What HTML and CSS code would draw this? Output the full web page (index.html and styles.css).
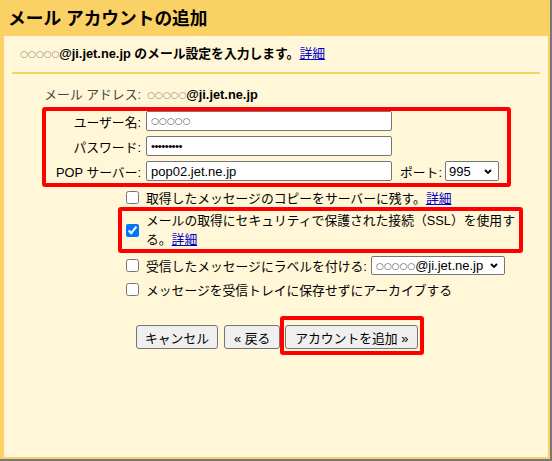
FILE: index.html
```html
<!DOCTYPE html>
<html lang="ja">
<head>
<meta charset="utf-8">
<title>メール アカウントの追加</title>
<link rel="stylesheet" href="styles.css">
</head>
<body>
<div class="win">
  <div class="head">メール アカウントの追加</div>
  <div class="content">
    <p class="intro"><span class="mask">○○○○○</span>@ji.jet.ne.jp のメール設定を入力します。<a class="link" href="#">詳細</a></p>
    <div class="rule"></div>
    <div class="addr"><span class="addr-lbl">メール アドレス:</span><b class="addr-val"><span class="mask">○○○○○</span>@ji.jet.ne.jp</b></div>

    <div class="hl fields">
      <div class="frow"><label class="flbl">ユーザー名:</label><input class="field field-mask" type="text" value="○○○○○"></div>
      <div class="frow"><label class="flbl">パスワード:</label><input class="field field-pw" type="password" value="123456789"></div>
      <div class="frow"><label class="flbl">POP サーバー:</label><input class="field" type="text" value="pop02.jet.ne.jp"><span class="port-lbl">ポート:</span><span class="sel sel-port"><span>995</span><svg class="chev" width="8" height="5" viewBox="0 0 8 5"><path d="M1 1 L4 4 L7 1" fill="none" stroke="#000" stroke-width="1.8"/></svg></span></div>
    </div>

    <div class="crow"><input class="cb" type="checkbox"><span>取得したメッセージのコピーをサーバーに残す。<a class="link" href="#">詳細</a></span></div>

    <div class="hl ssl">
      <input class="cb" type="checkbox" checked>
      <span class="ssl-text">メールの取得にセキュリティで保護された接続（SSL）を使用す<br>る。<a class="link" href="#">詳細</a></span>
    </div>

    <div class="crow crow-tall"><input class="cb" type="checkbox"><span>受信したメッセージにラベルを付ける:</span><span class="sel sel-label"><span><span class="mask mask-sel">○○○○○</span>@ji.jet.ne.jp</span><svg class="chev" width="8" height="5" viewBox="0 0 8 5"><path d="M1 1 L4 4 L7 1" fill="none" stroke="#000" stroke-width="1.8"/></svg></span></div>

    <div class="crow crow-tall"><input class="cb" type="checkbox"><span>メッセージを受信トレイに保存せずにアーカイブする</span></div>

    <div class="buttons">
      <button class="btn btn-cancel" type="button">キャンセル</button>
      <button class="btn btn-back" type="button">« 戻る</button>
      <div class="hl add-box"><button class="btn btn-add" type="button">アカウントを追加 »</button></div>
    </div>
  </div>
</div>
</body>
</html>
```
FILE: styles.css
```css
html, body {
  margin: 0;
  padding: 0;
}
body {
  width: 552px;
  height: 461px;
  font-family: "Liberation Sans", "Noto Sans CJK JP", sans-serif;
  font-size: 12.8px;
  color: #000;
}
.win {
  box-sizing: border-box;
  width: 552px;
  height: 461px;
  background: #fad165;
  border-right: 2px solid #777;
  border-bottom: 2px solid #777;
  padding: 0 2px 2px 4px;
  display: flex;
  flex-direction: column;
}
.head {
  height: 36px;
  box-sizing: border-box;
  padding: 1px 0 0 4px;
  line-height: 36px;
  font-size: 17.7px;
  font-weight: bold;
  white-space: nowrap;
}
.content {
  flex: 1;
  background: #fff7d7;
}
.link {
  color: #0000cc;
  text-decoration: underline;
  font-weight: normal;
}
.mask {
  font-family: "DejaVu Sans", sans-serif;
  font-size: 9px;
  font-weight: normal;
  color: #8c8c8c;
  vertical-align: 1px;
}
.mask-sel {
  color: #555;
}
.intro {
  margin: 0;
  padding: 8px 0 0 16px;
  line-height: 19px;
  font-weight: bold;
  white-space: nowrap;
}
.rule {
  margin: 8px 8px 0 8px;
  height: 2px;
  background: #fad165;
}
.addr {
  margin-top: 11px;
  display: flex;
  line-height: 19px;
  white-space: nowrap;
}
.addr-lbl {
  width: 137px;
  text-align: right;
  color: #444;
}
.addr-val {
  margin-left: 6px;
}
.hl {
  box-sizing: border-box;
  border: 4px solid #f00;
  border-radius: 3px;
}
.fields {
  margin: 2px 0 0 38px;
  width: 469px;
  padding: 0 0 2px 0;
}
.frow {
  display: flex;
  align-items: center;
  height: 20px;
  margin-top: 5px;
  white-space: nowrap;
}
.frow:first-child {
  margin-top: 0;
}
.flbl {
  width: 95px;
  margin-right: 5px;
  text-align: right;
}
.field {
  box-sizing: border-box;
  width: 246px;
  height: 20px;
  margin: 0;
  padding: 0 4px;
  border: 1px solid #767676;
  border-radius: 2px;
  background: #fff;
  font-family: "Liberation Sans", "Noto Sans CJK JP", sans-serif;
  font-size: 13px;
  color: #000;
  outline: none;
}
.field-mask {
  font-family: "DejaVu Sans", sans-serif;
  font-size: 9px;
  color: #555;
}
.field-pw {
  font-size: 11.5px;
  letter-spacing: -0.6px;
}
.port-lbl {
  margin: 0 3px 0 8px;
}
.sel {
  box-sizing: border-box;
  display: inline-flex;
  align-items: center;
  justify-content: space-between;
  height: 20px;
  border: 1px solid #767676;
  border-radius: 2px;
  background: #fff;
  white-space: nowrap;
}
.sel-port {
  width: 54px;
  padding: 0 6px 0 3px;
  font-size: 13px;
}
.sel-label {
  width: 134px;
  height: 19px;
  padding: 0 6px 0 4px;
  margin-left: 4px;
  font-size: 13px;
}
.chev {
  display: block;
}
.crow {
  display: flex;
  align-items: center;
  height: 20px;
  padding-left: 122px;
  white-space: nowrap;
}
.crow-tall {
  height: 24px;
}
.cb {
  width: 13px;
  height: 13px;
  margin: 0 7px 0 0;
  flex: none;
}
.ssl {
  margin-left: 114px;
  width: 405px;
  height: 46px;
  display: flex;
  align-items: center;
  padding-left: 4px;
}
.ssl-text {
  line-height: 19px;
  white-space: nowrap;
}
.buttons {
  display: flex;
  align-items: baseline;
  margin: 15px 0 0 132px;
}
.btn {
  box-sizing: border-box;
  height: 24px;
  margin: 0;
  padding: 0 7px;
  border: 1px solid #767676;
  border-radius: 3px;
  background: #efefef;
  font-family: "Liberation Sans", "Noto Sans CJK JP", sans-serif;
  font-size: 12.8px;
  color: #000;
  white-space: nowrap;
}
.btn-cancel {
  margin-right: 6px;
  padding: 0 8px;
}
.btn-back {
  padding: 0 9px;
}
.btn-add {
  padding: 0 9px;
}
.add-box {
  padding: 5px 2px 2px 1px;
}
```
